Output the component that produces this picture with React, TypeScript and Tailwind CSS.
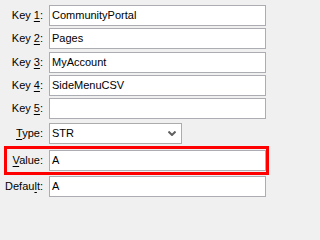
import React from "react";

type FieldProps = {
    pre: string;
    key_: string;
    post: string;
    value: string;
};

function Label({ pre, key_, post, width }: { pre: string; key_: string; post: string; width: string }) {
    return (
        <div className={`${width} shrink-0 pr-[6px] text-right whitespace-nowrap`}>
            {pre}
            <span className="underline underline-offset-[2px]">{key_}</span>
            {post}:
        </div>
    );
}

function Field({ pre, key_, post, value }: FieldProps) {
    return (
        <div className="flex items-center h-[21px]">
            <Label pre={pre} key_={key_} post={post} width="w-[49px]" />
            <div className="w-[217px] h-[21px] shrink-0 border border-[#abadb3] bg-white px-[2px] flex items-center">
                {value}
            </div>
        </div>
    );
}

export default function App() {
    const keys = [
        { n: "1", v: "CommunityPortal", mt: "mt-[5px]" },
        { n: "2", v: "Pages", mt: "mt-[2px]" },
        { n: "3", v: "MyAccount", mt: "mt-[3px]" },
        { n: "4", v: "SideMenuCSV", mt: "mt-[2px]" },
        { n: "5", v: "", mt: "mt-[2px]" },
    ];

    return (
        <div
            className="min-w-[271px] min-h-screen bg-[#f0f0f0] text-[11px] leading-none text-black flex flex-col overflow-hidden"
            style={{ fontFamily: '"Liberation Sans", Arial, sans-serif' }}
        >
            {keys.map((k) => (
                <div key={k.n} className={k.mt}>
                    <Field pre="Key " key_={k.n} post="" value={k.v} />
                </div>
            ))}

            {/* Type combobox */}
            <div className="flex items-center h-[21px] mt-[4px]">
                <Label pre="" key_="T" post="ype" width="w-[49px]" />
                <div className="w-[133px] h-[21px] shrink-0 border border-[#acacac] bg-white pl-[2px] pr-[5px] flex items-center justify-between">
                    <span>STR</span>
                    <svg width="8" height="5" viewBox="0 0 8 5">
                        <polyline points="0.5,0.5 4,4 7.5,0.5" fill="none" stroke="#606060" strokeWidth="2" />
                    </svg>
                </div>
            </div>

            {/* highlighted Value row */}
            <div className="mt-[2px] ml-[4px] w-[265px] border-[3px] border-[#ff0000] py-[1px] flex items-center">
                <Label pre="" key_="V" post="alue" width="w-[42px]" />
                <div className="w-[217px] h-[21px] shrink-0 border border-[#abadb3] bg-white px-[2px] flex items-center">
                    A
                </div>
            </div>

            <div className="mt-[1px]">
                <Field pre="Defau" key_="l" post="t" value="A" />
            </div>
        </div>
    );
}
